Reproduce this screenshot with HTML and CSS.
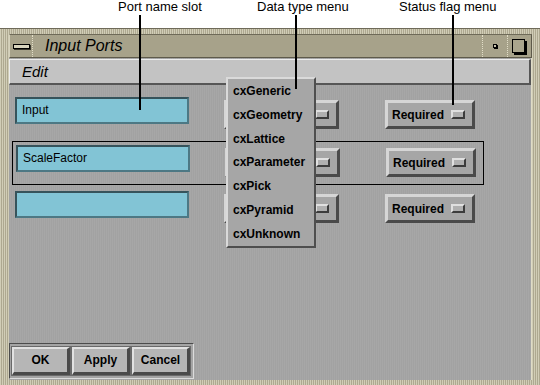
FILE: index.html
```html
<!DOCTYPE html>
<html>
<head>
<meta charset="utf-8">
<link rel="stylesheet" href="styles.css">
</head>
<body>
<div class="page">
  <div class="annot">
    <span class="label l1">Port name slot</span>
    <span class="label l2">Data type menu</span>
    <span class="label l3">Status flag menu</span>
  </div>
  <div class="window">
    <div class="titlebar">
      <div class="tb-menu"><span class="bar"></span></div>
      <div class="tb-title">Input Ports</div>
      <div class="tb-min"><span class="dot"></span></div>
      <div class="tb-max"><span class="sq"></span></div>
    </div>
    <div class="client">
      <div class="menubar"><span class="menu-edit">Edit</span></div>
      <div class="content">
        <div class="row">
          <div class="field">Input</div>
          <div class="opt type"><span class="ind"></span></div>
          <div class="opt status">Required<span class="ind"></span></div>
        </div>
        <div class="row framed">
          <div class="field">ScaleFactor</div>
          <div class="opt type"><span class="ind"></span></div>
          <div class="opt status">Required<span class="ind"></span></div>
        </div>
        <div class="row last">
          <div class="field"></div>
          <div class="opt type"><span class="ind"></span></div>
          <div class="opt status">Required<span class="ind"></span></div>
        </div>
        <div class="actions">
          <div class="btn">OK</div>
          <div class="btn">Apply</div>
          <div class="btn">Cancel</div>
        </div>
      </div>
    </div>
  </div>

  <div class="popup">
    <div class="item">cxGeneric</div>
    <div class="item">cxGeometry</div>
    <div class="item">cxLattice</div>
    <div class="item">cxParameter</div>
    <div class="item">cxPick</div>
    <div class="item">cxPyramid</div>
    <div class="item">cxUnknown</div>
  </div>

  <div class="leader ld1"></div>
  <div class="leader ld2"></div>
  <div class="leader ld3"></div>
</div>
</body>
</html>
```

FILE: styles.css
```css
* { box-sizing: border-box; }
html, body { margin: 0; padding: 0; background: #ffffff; }
body { font-family: "Liberation Sans", Arial, sans-serif; }

.page {
  position: relative;
  width: 540px;
  height: 385px;
  overflow: hidden;
  background: #ffffff;
}

/* annotation band */
.annot {
  position: relative;
  height: 28px;
  background: #ffffff;
}
.label {
  position: absolute;
  top: 0;
  font-size: 13px;
  line-height: 13px;
  color: #000;
  white-space: nowrap;
}
.l1 { left: 118px; }
.l2 { left: 257px; }
.l3 { left: 399px; }

.leader {
  position: absolute;
  width: 2px;
  background: #000;
  top: 15px;
  z-index: 5;
}
.ld1 { left: 139px; height: 95px; }
.ld2 { left: 295px; height: 74px; }
.ld3 { left: 452px; height: 90px; }

/* window frame */
.window {
  height: 357px;
  border-top: 1px solid #6f6b5a;
  padding: 5px 8px 5px 9px;
  background-color: #bdb8a0;
  background-image: repeating-linear-gradient(90deg, rgba(255,255,235,0.3) 0 1px, rgba(110,104,80,0.2) 1px 2px);
  display: flex;
  flex-direction: column;
}

.titlebar {
  height: 24px;
  display: flex;
  background: #a7a28a;
  border-top: 1px solid #6e6a58;
  border-left: 1px solid #d6d2bc;
  border-right: 1px solid #5e5a4a;
  border-bottom: 1px solid #5e5a4a;
}
.tb-menu {
  width: 23px;
  border-right: 1px dotted #e2dec8;
  display: flex;
  align-items: center;
  justify-content: center;
}
.tb-menu .bar {
  width: 17px;
  height: 5px;
  border: 1px solid #000;
  background: #d8d4be;
  box-shadow: 1px 1px 0 #3a382e;
}
.tb-title {
  flex: 1;
  padding-left: 12px;
  font-size: 16px;
  font-style: italic;
  line-height: 21px;
  color: #000;
}
.tb-min {
  width: 25px;
  border-left: 1px dotted #e2dec8;
  display: flex;
  align-items: center;
  justify-content: center;
}
.tb-min .dot {
  width: 4px;
  height: 4px;
  border: 1px solid #000;
  background: #c8c4ae;
  box-shadow: 1px 1px 0 #000;
}
.tb-max {
  width: 24px;
  border-left: 1px dotted #e2dec8;
  display: flex;
  align-items: center;
  justify-content: center;
}
.tb-max .sq {
  width: 13px;
  height: 14px;
  border: 1px solid #000;
  background: #aaa58d;
  box-shadow: 2px 2px 0 #000;
  margin-right: 2px;
  margin-bottom: 1px;
}

/* client */
.client {
  flex: 1;
  display: flex;
  flex-direction: column;
  background-color: #a4a4a4;
  background-image: repeating-linear-gradient(90deg, #a2a2a2 0 1px, #a7a7a7 1px 2px);
  border-right: 1px solid #e0dcc6;
}
.menubar {
  height: 26px;
  margin-top: 1px;
  background: #c3c3c3;
  border-top: 1px solid #ececec;
  border-left: 1px solid #ececec;
  border-right: 2px solid #565656;
  border-bottom: 2px solid #565656;
  padding-left: 12px;
}
.menu-edit {
  font-size: 15px;
  font-style: italic;
  line-height: 23px;
  color: #000;
}

.content {
  flex: 1;
  display: flex;
  flex-direction: column;
  padding: 12px 0 0 3px;
}

.row {
  display: flex;
  align-items: flex-start;
  padding-left: 3px;
  height: 32px;
}
.row.framed {
  margin-top: 12px;
  height: 44px;
  width: 472px;
  border: 1px solid #000;
  padding: 3px 0 0 3px;
}
.row.last {
  margin-top: 6px;
  height: 34px;
}

.field {
  width: 174px;
  height: 27px;
  background: #82c4d5;
  border-top: 2px solid #36535b;
  border-left: 2px solid #36535b;
  border-right: 2px solid #4d7884;
  border-bottom: 2px solid #4d7884;
  font-size: 12px;
  line-height: 23px;
  padding-left: 5px;
  color: #000;
}

.opt {
  height: 29px;
  margin-top: 3px;
  display: flex;
  align-items: center;
  justify-content: space-between;
  background: #a6a6a6;
  border-top: 3px solid #d6d6d6;
  border-left: 3px solid #d6d6d6;
  border-right: 3px solid #4a4a4a;
  border-bottom: 3px solid #4a4a4a;
  font-size: 12px;
  font-weight: bold;
  color: #000;
  padding: 0 7px 0 4px;
}
.opt.type {
  width: 115px;
  margin-left: 35px;
}
.opt.status {
  width: 90px;
  margin-left: 46px;
}
.opt.type .ind { margin-left: auto; }
.ind {
  width: 14px;
  height: 9px;
  background: #b0b0b0;
  border-top: 2px solid #e0e0e0;
  border-left: 2px solid #e0e0e0;
  border-right: 2px solid #3c3c3c;
  border-bottom: 2px solid #3c3c3c;
}

/* bottom action area */
.actions {
  margin-top: auto;
  margin-left: -3px;
  margin-bottom: 1px;
  width: 185px;
  height: 36px;
  display: flex;
  gap: 2px;
  padding: 3px 0 0 2px;
  border-top: 1px solid #4c4c4c;
  border-left: 1px solid #4c4c4c;
  border-right: 1px solid #dcdcdc;
  border-bottom: 1px solid #dcdcdc;
  background: #a4a4a4;
}
.btn {
  width: 58px;
  height: 28px;
  background: #b6b6b6;
  border-top: 2px solid #e2e2e2;
  border-left: 2px solid #e2e2e2;
  border-right: 3px solid #4a4a4a;
  border-bottom: 3px solid #4a4a4a;
  outline: 1px solid #6a6a6a;
  font-size: 12px;
  font-weight: bold;
  text-align: center;
  line-height: 22px;
  color: #000;
}

/* popup menu (overlay) */
.popup {
  position: absolute;
  left: 226px;
  top: 77px;
  width: 90px;
  height: 171px;
  background: #a6a6a6;
  border-top: 2px solid #dadada;
  border-left: 2px solid #dadada;
  border-right: 2px solid #4e4e4e;
  border-bottom: 2px solid #4e4e4e;
  padding-top: 1px;
  z-index: 4;
}
.item {
  height: 23.8px;
  line-height: 23px;
  padding-left: 5px;
  font-size: 12px;
  font-weight: bold;
  color: #000;
  white-space: nowrap;
}
```
